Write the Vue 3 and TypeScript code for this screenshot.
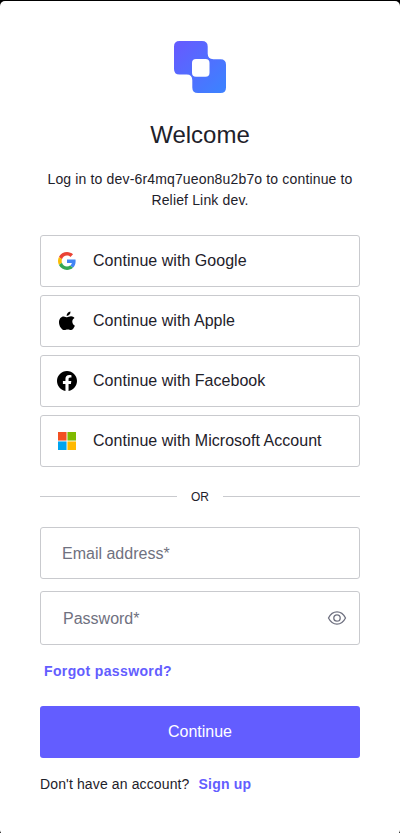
<script setup lang="ts">
import { ref } from 'vue'

type Provider = 'google' | 'apple' | 'facebook' | 'microsoft'

const providers: { id: Provider; label: string }[] = [
  { id: 'google', label: 'Continue with Google' },
  { id: 'apple', label: 'Continue with Apple' },
  { id: 'facebook', label: 'Continue with Facebook' },
  { id: 'microsoft', label: 'Continue with Microsoft Account' },
]

const email = ref('')
const password = ref('')
const showPassword = ref(false)
</script>

<template>
  <div class="page">
    <main class="card">
      <svg class="logo" width="52" height="52" viewBox="0 0 52 52">
        <defs>
          <linearGradient id="logo-fill" x1="0" y1="0" x2="1" y2="1">
            <stop offset="0.1" stop-color="#635dff" />
            <stop offset="0.9" stop-color="#3f80ff" />
          </linearGradient>
        </defs>
        <path
          fill="url(#logo-fill)"
          fill-rule="evenodd"
          d="M5.5 0H28Q33.7 0 33.7 5.5V12.5Q33.7 18.2 39.3 18.2H46.5Q52 18.2 52 23.7V46.5Q52 52 46.5 52H24Q18.3 52 18.3 46.5V39.2Q18.3 33.6 12.7 33.6H5.5Q0 33.6 0 28.1V5.5Q0 0 5.5 0ZM22 18Q18 18 18 22V31.7Q18 35.7 22 35.7H31.5Q35.5 35.7 35.5 31.7V22Q35.5 18 31.5 18Z"
        />
      </svg>
      <h1>Welcome</h1>
      <p class="intro">Log in to dev-6r4mq7ueon8u2b7o to continue to Relief Link dev.</p>

      <div class="providers">
        <button v-for="p in providers" :key="p.id" type="button" class="provider">
          <span class="icon">
            <svg v-if="p.id === 'google'" width="18" height="18" viewBox="0 0 48 48">
              <path fill="#EA4335" d="M24 9.5c3.54 0 6.71 1.22 9.21 3.6l6.85-6.85C35.9 2.38 30.47 0 24 0 14.62 0 6.51 5.38 2.56 13.22l7.98 6.19C12.43 13.72 17.74 9.5 24 9.5z" />
              <path fill="#4285F4" d="M46.98 24.55c0-1.57-.15-3.09-.38-4.55H24v9.02h12.94c-.58 2.96-2.26 5.48-4.78 7.18l7.73 6c4.51-4.18 7.09-10.36 7.09-17.65z" />
              <path fill="#FBBC05" d="M10.53 28.59c-.48-1.45-.76-2.99-.76-4.59s.27-3.14.76-4.59l-7.98-6.19C.92 16.46 0 20.12 0 24c0 3.88.92 7.54 2.56 10.78l7.97-6.19z" />
              <path fill="#34A853" d="M24 48c6.48 0 11.93-2.13 15.89-5.81l-7.73-6c-2.15 1.45-4.92 2.3-8.16 2.3-6.26 0-11.57-4.22-13.47-9.91l-7.98 6.19C6.51 42.62 14.62 48 24 48z" />
            </svg>
            <svg v-else-if="p.id === 'apple'" width="20" height="20" viewBox="0 0 20 20">
              <path d="M13.500.500c.2 2.300-1.600 4.400-3.900 4.500C9.400 2.900 11.200.700 13.500.500Z" />
              <path d="M17.900 14.700c-.9 2-2.200 4.400-4 4.400-1.200 0-1.700-.7-3.200-.7s-2 .7-3.200.7C4.600 19.100 2 15.200 2 11.300 2 7.700 4.100 5.400 6.600 5.400c1.400 0 2.600.9 3.500.9s2.300-1 4-1c1.400 0 2.600.7 3.400 1.700-1.500.8-2.200 2-2.200 3.500 0 1.800 1 3.400 2.600 4.200Z" />
            </svg>
            <svg v-else-if="p.id === 'facebook'" width="20" height="20" viewBox="0 0 24 24">
              <path d="M24 12.073c0-6.627-5.373-12-12-12s-12 5.373-12 12c0 5.99 4.388 10.954 10.125 11.854v-8.385H7.078v-3.47h3.047V9.43c0-3.007 1.792-4.669 4.533-4.669 1.312 0 2.686.235 2.686.235v2.953H15.83c-1.491 0-1.956.925-1.956 1.874v2.25h3.328l-.532 3.47h-2.796v8.385C19.612 23.027 24 18.062 24 12.073z" />
            </svg>
            <svg v-else width="18" height="18" viewBox="0 0 18 18">
              <path fill="#f25022" d="M0 0h8.550v8.550H0z" />
              <path fill="#7fba00" d="M9.450 0H18v8.550H9.450z" />
              <path fill="#00a4ef" d="M0 9.450h8.550V18H0z" />
              <path fill="#ffb900" d="M9.450 9.450H18V18H9.450z" />
            </svg>
          </span>
          <span>{{ p.label }}</span>
        </button>
      </div>

      <div class="divider"><span>OR</span></div>

      <form @submit.prevent>
        <input v-model="email" class="field email" type="text" placeholder="Email address*" aria-label="Email address" />
        <div class="field password">
          <input v-model="password" :type="showPassword ? 'text' : 'password'" placeholder="Password*" aria-label="Password" />
          <button type="button" class="eye" aria-label="Show password" @click="showPassword = !showPassword">
            <svg width="20" height="16" viewBox="0 0 20 16" fill="none" stroke="#6f7180" stroke-width="1.300">
              <path d="M1.500 8C3.400 4.200 6.400 1.900 10 1.900S16.600 4.200 18.500 8C16.600 11.800 13.600 14.100 10 14.100S3.400 11.800 1.500 8Z" />
              <circle cx="10" cy="8" r="3.200" />
            </svg>
          </button>
        </div>
        <a class="link forgot">Forgot password?</a>
        <button class="submit" type="submit">Continue</button>
      </form>
      <p class="signup">Don't have an account? <a class="link">Sign up</a></p>
    </main>
  </div>
</template>

<style>
body {
  margin: 0;
  background: #000;
}
</style>

<style scoped>
.page {
  box-sizing: border-box;
  height: 833px;
  padding-top: 1px;
  overflow: hidden;
  background: #000;
  color: #1e212a;
  font-family: "Liberation Sans", Arial, sans-serif;
}
.card {
  box-sizing: border-box;
  display: flex;
  flex-direction: column;
  height: 834px;
  padding: 40px 40px 0;
  border-radius: 5px;
  background: #fff;
}
.logo {
  display: block;
  align-self: center;
  flex: none;
}
h1 {
  margin: 24px 0 0;
  font-size: 24px;
  font-weight: 400;
  line-height: 36px;
  text-align: center;
}
.intro {
  margin: 16px 0 0;
  font-size: 14px;
  letter-spacing: 0.155px;
  line-height: 21px;
  text-align: center;
}
.providers {
  display: flex;
  flex-direction: column;
  gap: 8px;
  margin-top: 24px;
}
button,
input {
  font: inherit;
  color: inherit;
}
.provider {
  box-sizing: border-box;
  display: flex;
  align-items: center;
  gap: 16px;
  height: 52px;
  padding: 0 16px;
  border: 1px solid #c9cace;
  border-radius: 3px;
  background: #fff;
  font-size: 16px;
  letter-spacing: 0.03px;
}
.icon {
  display: flex;
  align-items: center;
  justify-content: center;
  width: 20px;
  height: 20px;
}
.divider {
  display: flex;
  align-items: center;
  gap: 14px;
  height: 19px;
  margin-top: 20px;
  font-size: 12px;
}
.divider span {
  line-height: 19px;
  padding-top: 1px;
}
.divider::before,
.divider::after {
  content: "";
  flex: 1;
  height: 1px;
  background: #c9cace;
}
form {
  display: flex;
  flex-direction: column;
  margin-top: 21px;
}
.field {
  box-sizing: border-box;
  width: 100%;
  height: 52px;
  padding: 0 21px;
  border: 1px solid #c9cace;
  border-radius: 3px;
  background: #fff;
  font-size: 16px;
  outline: none;
}
.email {
  padding-top: 2px;
}
input::placeholder {
  color: #6f7180;
  opacity: 1;
}
.password {
  display: flex;
  align-items: center;
  height: 54px;
  margin-top: 12px;
  padding: 0 12px 0 22px;
}
.password input {
  flex: 1;
  min-width: 0;
  padding: 2px 0 0;
  border: 0;
  outline: none;
}
.eye {
  display: flex;
  padding: 0;
  border: 0;
  background: none;
}
.link {
  color: #635dff;
  font-size: 14px;
  font-weight: 700;
}
.forgot {
  align-self: flex-start;
  margin: 16px 0 0 4px;
  letter-spacing: 0.37px;
  line-height: 21px;
}
.submit {
  height: 52px;
  margin-top: 24px;
  border: 0;
  border-radius: 3px;
  background: #635dff;
  color: #fff;
  font-size: 16px;
}
.signup {
  margin: 16px 0 0;
  font-size: 14px;
  letter-spacing: 0.13px;
  line-height: 21px;
}
.signup .link {
  margin-left: 5px;
  letter-spacing: 0.2px;
}
</style>
